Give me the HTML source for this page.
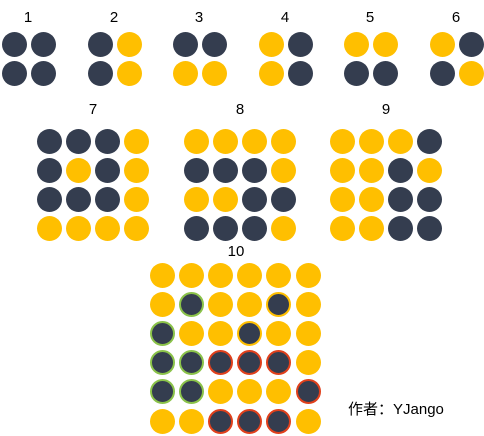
<!DOCTYPE html>
<html><head><meta charset="utf-8"><style>
body{margin:0;width:484px;height:436px;background:#fff;position:relative;overflow:hidden;font-family:"Liberation Sans","Noto Sans CJK SC",sans-serif}
.c{position:absolute;width:25px;height:25px;border-radius:50%;box-sizing:border-box}
.D{background:#343d4f}.Y{background:#ffbf00}
.g{border:2px solid #8bc34a}.r{border:2px solid #e0401c}.y{border:2px solid #ffbf00}
.l{position:absolute;font-size:15px;color:#000;transform:translateX(-50%)}
</style></head><body>
<div class="l" style="left:28px;top:9px">1</div>
<div class="l" style="left:114px;top:9px">2</div>
<div class="l" style="left:199px;top:9px">3</div>
<div class="l" style="left:285px;top:9px">4</div>
<div class="l" style="left:370px;top:9px">5</div>
<div class="l" style="left:456px;top:9px">6</div>
<div class="l" style="left:93px;top:101px">7</div>
<div class="l" style="left:240px;top:101px">8</div>
<div class="l" style="left:386px;top:101px">9</div>
<div class="l" style="left:236px;top:243px">10</div>
<div style="position:absolute;left:348px;top:398px;font-size:15px">作者：YJango</div>
<div id="w"></div>
<script>
var w=document.getElementById('w'),h='';
function grid(x0,y0,rows){rows.forEach(function(r,i){r.split(' ').forEach(function(t,j){
h+='<div class="c '+t[0]+(t[1]?' '+t[1]:'')+'" style="left:'+(x0+j*29.2-12.5)+'px;top:'+(y0+i*29.2-12.5)+'px"></div>';});});}
var s=[["D D","D D"],["D Y","D Y"],["D D","Y Y"],["Y D","Y D"],["Y Y","D D"],["Y D","D Y"]];
var xs=[14,100,185,271,356,442];
s.forEach(function(p,k){grid(xs[k],44,p);});
grid(49,141,["D D D Y","D Y D Y","D D D Y","Y Y Y Y"]);
grid(196,141,["Y Y Y Y","D D D Y","Y Y D D","D D D Y"]);
grid(342,141,["Y Y Y D","Y Y D Y","Y Y D D","Y Y D D"]);
grid(162,275,["Y Y Y Y Y Y","Y Dg Y Y Dy Y","Dg Y Y Dy Y Y","Dg Dg Dr Dr Dr Y","Dg Dg Y Y Y Dr","Y Y Dr Dr Dr Y"]);
w.innerHTML=h;
</script>
</body></html>
